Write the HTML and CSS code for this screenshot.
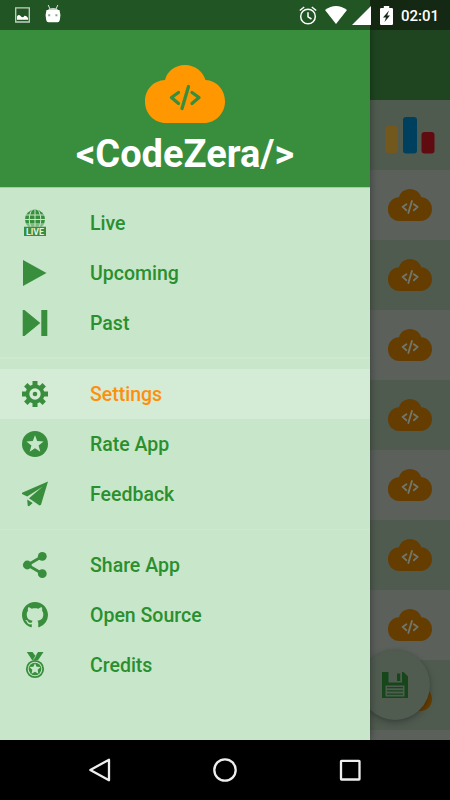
FILE: index.html
```html
<!DOCTYPE html>
<html lang="en">
<head>
<meta charset="utf-8">
<title>CodeZera</title>
<link rel="stylesheet" href="styles.css">
</head>
<body>
<svg class="defs" aria-hidden="true">
  <symbol id="cloud" viewBox="0 0 80 58">
    <path class="cloud-fill" d="M20 15C22 6.500 30 0 40 0S58 6.500 60.500 15C72 15.500 80 25 80 36.500S71 58 59 58H21C9 58 0 48.500 0 36.500S8.500 15.500 20 15Z"/>
    <path class="cloud-code" d="M33.500 27.500L26.500 32.500L33.500 38.500M47 27.500L54 32.500L47 38.500M43.500 21.500L37 43.500"/>
  </symbol>
</svg>
<div class="phone">
  <main class="screen">
    <div class="toolbar"></div>
    <ul class="contests">
      <li><svg class="bars" viewBox="0 0 50 37"><rect x="0" y="9" width="13" height="27" rx="3" fill="#73581d"/><rect x="18" y="0" width="14" height="36.500" rx="3" fill="#00405f"/><rect x="36.500" y="15" width="13" height="21.500" rx="3" fill="#600b10"/></svg></li>
      <li><svg class="cloud"><use href="#cloud"/></svg></li>
      <li><svg class="cloud"><use href="#cloud"/></svg></li>
      <li><svg class="cloud"><use href="#cloud"/></svg></li>
      <li><svg class="cloud"><use href="#cloud"/></svg></li>
      <li><svg class="cloud"><use href="#cloud"/></svg></li>
      <li><svg class="cloud"><use href="#cloud"/></svg></li>
      <li><svg class="cloud"><use href="#cloud"/></svg></li>
      <li><svg class="cloud"><use href="#cloud"/></svg></li>
      <li></li>
    </ul>
    <div class="fab">
      <svg viewBox="0 0 26 26"><path fill="#16461a" fill-rule="evenodd" d="M0 0H6.500V10.500H20V0H21.500L26 4.500V26H0ZM3.500 13.500V24.500H22.500V13.500Z"/><path fill="#16461a" d="M15 1.500H18.200V9H15ZM5 15H21V16.200H5ZM5 18.200H21V19.500H5ZM5 21.500H21V22.800H5Z"/></svg>
    </div>
  </main>

  <aside class="drawer">
    <header class="brand">
      <svg class="brand-logo"><use href="#cloud"/></svg>
      <h1>&lt;CodeZera/&gt;</h1>
    </header>
    <nav>
      <ul class="group">
        <li><svg viewBox="0 0 26 26"><clipPath id="globe"><circle cx="13" cy="9.500" r="10"/></clipPath><circle cx="13" cy="9.500" r="10"/><g class="cut" clip-path="url(#globe)"><path d="M13 -1V17M2 5H24M2 9.500H24M2 14H24"/><ellipse cx="13" cy="9.500" rx="5.800" ry="11"/></g><path d="M2 16.500H24V26H2Z"/><path class="cut" d="M2 16H24"/><text x="13" y="24.700" textLength="18" lengthAdjust="spacingAndGlyphs">LIVE</text></svg><span>Live</span></li>
        <li><svg viewBox="0 0 26 26"><path d="M1 0L24.500 13L1 26Z"/></svg><span>Upcoming</span></li>
        <li><svg viewBox="0 0 26 26"><path d="M.7 0H2.500L18.300 13L2.500 26H.7ZM19.300 0H25.300V26H19.300Z"/></svg><span>Past</span></li>
      </ul>
      <ul class="group">
        <li class="active"><svg viewBox="0 0 26 26"><path d="M10.500 3.800V0H15.500V3.800L17.800 4.800L20.500 2.100L23.900 5.500L21.200 8.200L22.200 10.500H26V15.500H22.200L21.200 17.800L23.900 20.500L20.500 23.900L17.800 21.200L15.500 22.200V26H10.500V22.200L8.200 21.200L5.500 23.900L2.100 20.500L4.800 17.800L3.800 15.500H0V10.500H3.800L4.800 8.200L2.100 5.500L5.500 2.100L8.200 4.800Z"/><circle cx="13" cy="13" r="5.700" fill="#d4ebd5"/><circle cx="13" cy="13" r="2.300"/></svg><span>Settings</span></li>
        <li><svg viewBox="0 0 26 26"><circle cx="13" cy="13" r="13"/><path fill="#c8e6c9" d="M13 4.200L15.200 10.100L21.600 10.500L16.600 14.500L18.300 20.700L13 17.200L7.700 20.700L9.400 14.500L4.400 10.500L10.800 10.100Z"/></svg><span>Rate App</span></li>
        <li><svg viewBox="0 0 26 26"><path d="M26 .5L0 11.800V13L5.200 15.500L20.500 5.800L7 17.300L17.500 24.500L19 23.800ZM5.200 18.600L5.700 24.700L7 25.300L10.700 22Z"/></svg><span>Feedback</span></li>
      </ul>
      <ul class="group">
        <li><svg viewBox="0 0 26 26"><path d="M20 4.500L5.500 13L20 21.500" fill="none" stroke="#388e3c" stroke-width="2.800"/><circle cx="20.300" cy="4.300" r="4.400"/><circle cx="5.300" cy="13" r="4.400"/><circle cx="20.300" cy="21.700" r="4.400"/></svg><span>Share App</span></li>
        <li><svg viewBox="0 0 16 16"><path d="M8 0C3.580 0 0 3.580 0 8c0 3.540 2.290 6.530 5.470 7.590.4.070.55-.17.55-.38 0-.19-.01-.82-.01-1.490-2.010.37-2.530-.49-2.690-.94-.09-.23-.48-.94-.82-1.130-.28-.15-.68-.52-.01-.53.63-.01 1.080.58 1.230.82.72 1.210 1.870.87 2.330.66.070-.52.28-.87.51-1.070-1.780-.2-3.640-.89-3.640-3.950 0-.87.31-1.590.82-2.150-.08-.2-.36-1.020.08-2.120 0 0 .67-.21 2.200.82.64-.18 1.320-.27 2-.27s1.360.09 2 .27c1.530-1.040 2.200-.82 2.200-.82.44 1.100.16 1.920.08 2.120.51.56.82 1.270.82 2.150 0 3.070-1.870 3.750-3.650 3.950.29.25.54.73.54 1.480 0 1.070-.01 1.930-.01 2.200 0 .21.15.46.55.38A8.010 8.010 0 0 0 16 8c0-4.420-3.580-8-8-8z"/></svg><span>Open Source</span></li>
        <li><svg viewBox="0 0 26 26"><path d="M4.800 0H10.500L13.500 4L16 0H21.500L16 8.200H10.200Z"/><path d="M14 3.500L11.500 7.500" stroke="#c8e6c9" stroke-width=".7"/><circle cx="13" cy="17" r="8.200" fill="#c8e6c9" stroke="#388e3c" stroke-width="1.800"/><circle cx="13" cy="17" r="6.300"/><path fill="#c8e6c9" d="M13 11.200L14.600 14.700L18.500 15.100L15.700 17.800L16.400 21.700L13 19.800L9.600 21.700L10.300 17.800L7.500 15.100L11.400 14.700Z"/></svg><span>Credits</span></li>
      </ul>
    </nav>
  </aside>

  <div class="status">
    <svg class="s-picture" viewBox="0 0 15 16"><path fill="none" stroke="#c3d1c3" stroke-width="1.300" d="M.7.900H14.300V15H.7Z"/><path fill="#fff" d="M2 12.800V9.500Q4 6.500 6.300 9.800Q8 11 9.500 8.700Q11.500 8.500 13 11V12.800Z"/></svg>
    <svg class="s-android" viewBox="0 0 16 18"><path d="M3.200 0L5 4M12.800 0L11 4" stroke="#dce5dc" stroke-width="1"/><path fill="#c9d7c9" d="M2.500 5.500Q3.500 3 8 3T13.500 5.500Z"/><path fill="#fff" d="M1.500 5H14.500Q16 9 14.800 15Q14.300 17.300 12.500 17.300H3.500Q1.700 17.300 1.200 15Q0 9 1.500 5Z"/><path fill="#8aa58b" d="M3.200 9.300H5.200V11.300H3.200ZM10.400 9.300H12.400V11.300H10.400Z"/></svg>
    <svg class="s-alarm" viewBox="0 0 18 19"><g fill="none" stroke="#fff" stroke-width="1.500"><circle cx="9" cy="10.500" r="7.300"/><path d="M.8 4.500L5.200 1M17.200 4.500L12.800 1M9 6.200V10.900L12.500 13"/></g></svg>
    <svg class="s-wifi" viewBox="0 0 22 18"><path fill="#fff" d="M0 4Q11-4 22 4L11 18Z"/></svg>
    <svg class="s-signal" viewBox="0 0 19 19"><path fill="#fff" d="M0 19L19 0V19Z"/></svg>
    <svg class="s-battery" viewBox="0 0 13 19"><path fill="#fff" d="M3.800 0H9.200V2H11.800Q13 2 13 3.200V17.800Q13 19 11.800 19H1.200Q0 19 0 17.800V3.200Q0 2 1.200 2H3.800Z"/><path fill="#16281a" d="M9 4.500L3 11.500H6L4.500 16L10 9.500H7.200Z"/></svg>
    <time>02:01</time>
  </div>

  <footer class="navbar">
    <svg viewBox="0 0 24 24"><path d="M21 1.700V22.300L2.300 12Z"/></svg>
    <svg viewBox="0 0 24 24"><circle cx="12" cy="12" r="10.700"/></svg>
    <svg viewBox="0 0 24 24"><rect x="3" y="2.800" width="18.500" height="18.700" rx=".5"/></svg>
  </footer>
</div>
</body>
</html>
```

FILE: styles.css
```css
* { box-sizing: border-box; }
body { margin: 0; font-family: Roboto, sans-serif; }
ul { list-style: none; margin: 0; padding: 0; }
svg { display: block; }
.defs { position: absolute; width: 0; height: 0; }

.phone { position: relative; width: 450px; height: 800px; overflow: hidden; background: #000; }

.screen { position: relative; height: 740px; overflow: hidden; background: #5b5f5b; }
.toolbar { height: 100px; background: #1e4520; }
.contests li {
  display: flex;
  justify-content: flex-end;
  align-items: center;
  height: 70px;
  padding-right: 18px;
  background: #5b605b;
}
.contests li:nth-child(odd) { background: #505b50; }
.contests li:last-child { background: #5b605b; }
.bars { width: 50px; height: 37px; margin-right: -3px; }
.cloud { width: 44px; height: 32px; color: #663d00; stroke: #71776c; }
.cloud-fill { fill: currentColor; stroke: none; }
.cloud-code { fill: none; stroke-width: 3.3; stroke-linecap: round; stroke-linejoin: round; }

.fab {
  position: absolute;
  right: 20px;
  bottom: 20px;
  display: grid;
  place-items: center;
  width: 70px;
  height: 70px;
  border-radius: 50%;
  background: #505c50;
  box-shadow: 0 3px 7px rgba(0, 0, 0, .25), 0 0 3px rgba(0, 0, 0, .1);
}
.fab svg { width: 26px; height: 26px; }

.drawer {
  position: absolute;
  top: 0;
  left: 0;
  width: 370px;
  height: 740px;
  background: #c8e6c9;
  box-shadow: 0 0 8px rgba(0, 0, 0, .4);
}
.brand {
  display: flex;
  flex-direction: column;
  align-items: center;
  height: 188px;
  padding-top: 65px;
  background: #388e3c;
  border-bottom: 1px solid #9fcfa1;
}
.brand-logo { width: 80px; height: 58px; color: #ff9800; stroke: #388e3c; }
.brand h1 {
  margin: 8px 0 0;
  font-size: 38px;
  line-height: 46px;
  font-weight: 700;
  color: #fff;
}

.group { padding: 10px 0; }
.group:first-child { padding-bottom: 9px; }
.group + .group { border-top: 2px solid #cfe9d0; }
.group:last-child { border-top-width: 1px; }
.group li {
  display: flex;
  align-items: center;
  gap: 42px;
  height: 50px;
  padding-left: 22px;
  font-size: 19.5px;
  font-weight: 500;
  color: #2a8f2e;
}
.group span { padding-top: 1px; }
.group svg { width: 26px; height: 26px; fill: #388e3c; overflow: visible; }
.group .active { color: #ff8f0a; background: #d4ebd5; }
.group .cut { fill: none; stroke: #c8e6c9; stroke-width: 1; }
.group text { font: 700 9.500px Roboto, sans-serif; fill: #e3f3e4; text-anchor: middle; }

.status {
  position: absolute;
  top: 0;
  left: 0;
  display: flex;
  align-items: center;
  width: 450px;
  height: 30px;
  padding-left: 15px;
  background: linear-gradient(90deg, #225524 370px, #13260f 370px, #142915);
}
.status > * { flex-shrink: 0; }
.s-picture { width: 15px; height: 16px; }
.s-android { width: 16px; height: 18px; margin: -2px 0 0 15px; }
.s-alarm { width: 18px; height: 19px; margin-left: 238px; }
.s-wifi { width: 22px; height: 18px; margin-left: 8px; }
.s-signal { width: 19px; height: 19px; margin-left: 5px; }
.s-battery { width: 13px; height: 19px; margin-left: 9px; }
.status time { margin-left: 8px; padding-top: 1px; font-size: 15px; font-weight: 500; color: #fff; }

.navbar { display: flex; justify-content: center; align-items: center; gap: 101px; height: 60px; background: #000; }
.navbar svg { width: 24px; height: 24px; fill: none; stroke: #eee; stroke-width: 2.300; stroke-linejoin: round; }
```
